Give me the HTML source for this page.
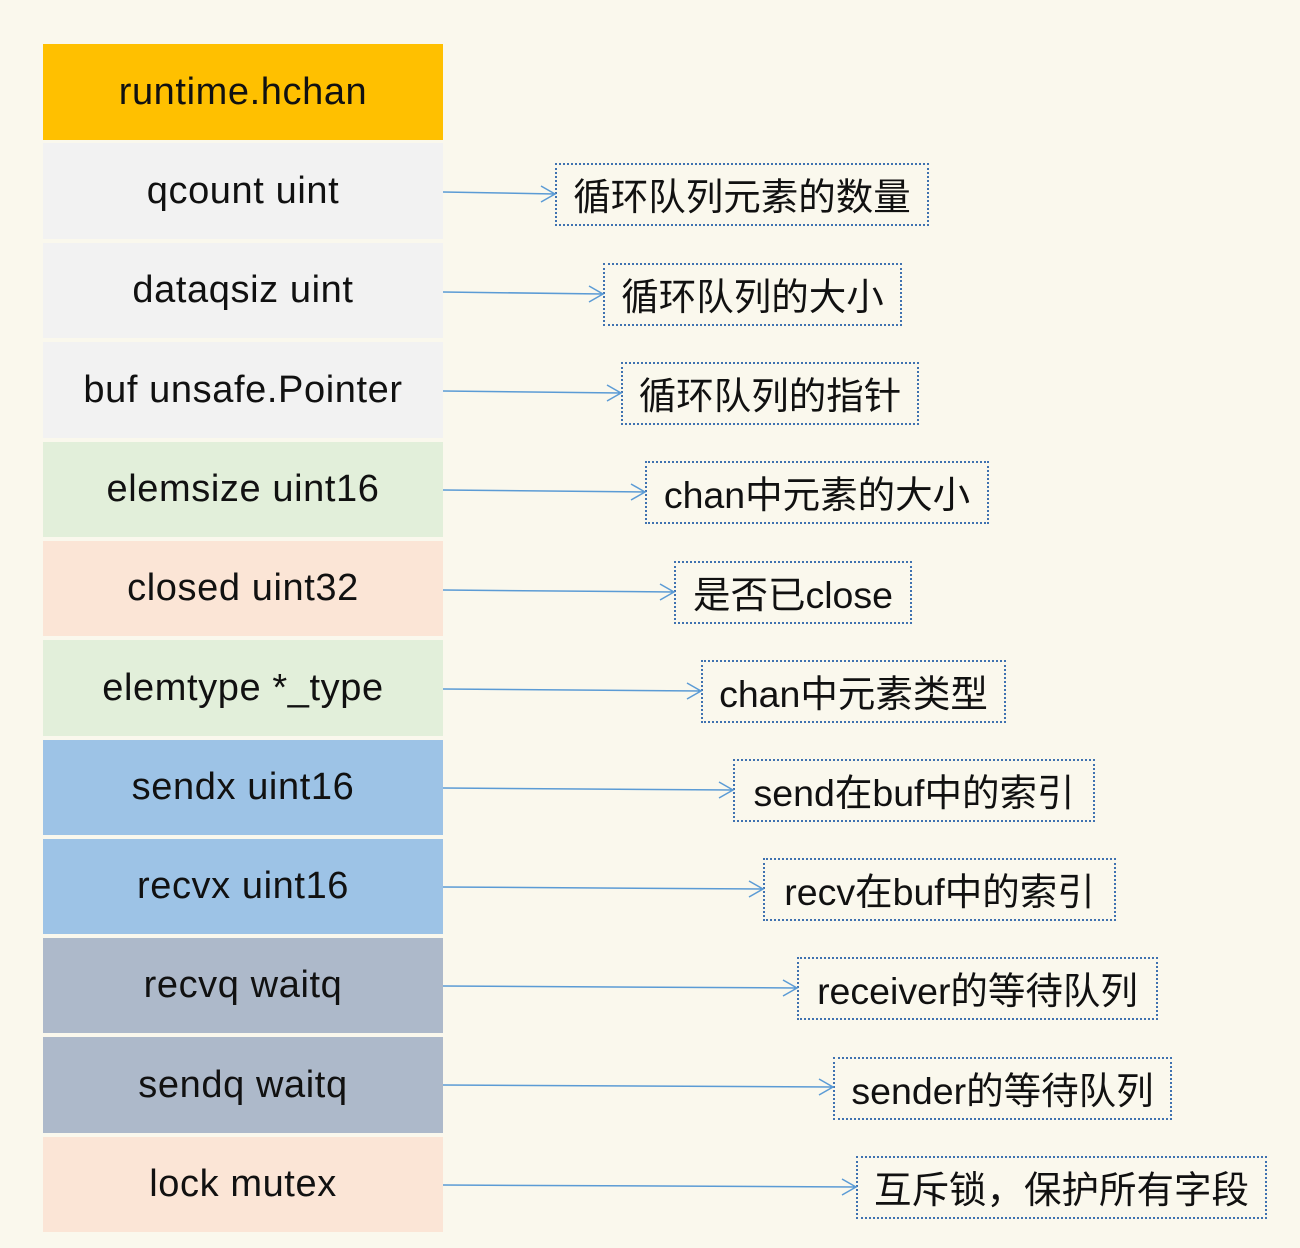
<!DOCTYPE html>
<html><head><meta charset="utf-8"><style>
html,body{margin:0;padding:0;width:1300px;height:1248px;background:#faf8ed;overflow:hidden;position:relative}
.r{position:absolute;left:43px;width:400px;display:flex;align-items:center;justify-content:center;font-family:"Liberation Sans","Noto Sans CJK SC",sans-serif;font-size:38px;letter-spacing:0.6px;color:#111;white-space:nowrap}
.b{position:absolute;border:2px dotted #3f72b0;box-sizing:border-box;display:flex;align-items:center;justify-content:center;font-family:"Liberation Sans","Noto Sans CJK SC",sans-serif;font-size:37.5px;color:#111;white-space:nowrap;height:63px;padding-bottom:2px}
svg{position:absolute;left:0;top:0}
</style></head><body>
<div class="r" style="top:44px;height:96px;background:#ffc000">runtime.hchan</div>
<div class="r" style="top:143px;height:96px;background:#f2f2f2">qcount uint</div>
<div class="r" style="top:243px;height:95px;background:#f2f2f2">dataqsiz uint</div>
<div class="r" style="top:342px;height:96px;background:#f2f2f2">buf unsafe.Pointer</div>
<div class="r" style="top:442px;height:95px;background:#e2efda">elemsize uint16</div>
<div class="r" style="top:541px;height:95px;background:#fbe5d6">closed uint32</div>
<div class="r" style="top:640px;height:96px;background:#e2efda">elemtype *_type</div>
<div class="r" style="top:740px;height:95px;background:#9dc3e6">sendx uint16</div>
<div class="r" style="top:839px;height:95px;background:#9dc3e6">recvx uint16</div>
<div class="r" style="top:938px;height:95px;background:#adb9ca">recvq waitq</div>
<div class="r" style="top:1037px;height:96px;background:#adb9ca">sendq waitq</div>
<div class="r" style="top:1137px;height:95px;background:#fbe5d6">lock mutex</div>

<div class="b" style="left:555px;top:163px;width:374px">循环队列元素的数量</div>
<div class="b" style="left:603px;top:263px;width:299px">循环队列的大小</div>
<div class="b" style="left:621px;top:362px;width:298px">循环队列的指针</div>
<div class="b" style="left:645px;top:461px;width:344px">chan中元素的大小</div>
<div class="b" style="left:674px;top:561px;width:238px">是否已close</div>
<div class="b" style="left:701px;top:660px;width:305px">chan中元素类型</div>
<div class="b" style="left:733px;top:759px;width:362px">send在buf中的索引</div>
<div class="b" style="left:763px;top:858px;width:353px">recv在buf中的索引</div>
<div class="b" style="left:797px;top:957px;width:361px">receiver的等待队列</div>
<div class="b" style="left:833px;top:1057px;width:339px">sender的等待队列</div>
<div class="b" style="left:856px;top:1156px;width:411px">互斥锁，保护所有字段</div>

<svg width="1300" height="1248" fill="none" stroke="#5b9bd5" stroke-width="1.5">
<path d="M443 192 L555 194 M541 186 L555 194 L541 202"/>
<path d="M443 292 L603 294 M589 286 L603 294 L589 302"/>
<path d="M443 391 L621 393 M607 385 L621 393 L607 401"/>
<path d="M443 490 L645 492 M631 484 L645 492 L631 500"/>
<path d="M443 590 L674 592 M660 584 L674 592 L660 600"/>
<path d="M443 689 L701 691 M687 683 L701 691 L687 699"/>
<path d="M443 788 L733 790 M719 782 L733 790 L719 798"/>
<path d="M443 887 L763 889 M749 881 L763 889 L749 897"/>
<path d="M443 986 L797 988 M783 980 L797 988 L783 996"/>
<path d="M443 1085 L833 1087 M819 1079 L833 1087 L819 1095"/>
<path d="M443 1185 L856 1187 M842 1179 L856 1187 L842 1195"/>
</svg>
</body></html>
